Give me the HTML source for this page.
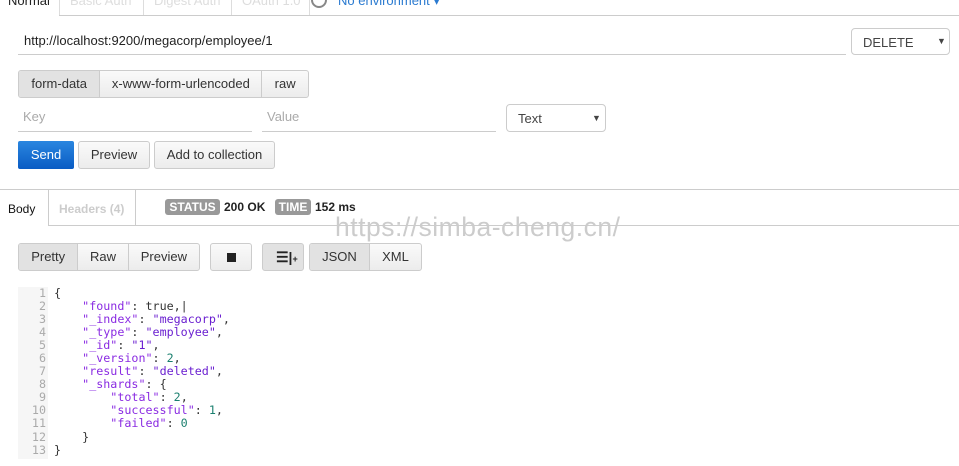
<!DOCTYPE html>
<html><head><style>
body{margin:0;width:959px;height:466px;background:#fff;font-family:"Liberation Sans",Arial,sans-serif;position:relative;overflow:hidden;font-size:13px;color:#333}
.a{position:absolute}
.btn{position:absolute;border:1px solid #ccc;border-radius:3px;background:linear-gradient(#fafafa,#ececec);box-sizing:border-box;text-align:center;font-size:13px;color:#333}
.grp{position:absolute;border:1px solid #ccc;border-radius:3px;display:flex;box-sizing:border-box;overflow:hidden;background:linear-gradient(#fafafa,#ececec)}
.grp div{border-right:1px solid #ccc;text-align:center;font-size:13px;color:#333;box-sizing:border-box}
.grp div:last-child{border-right:none}
.grp .on{background:#e2e2e2}
.code{position:absolute;left:54px;top:287px;font-family:"DejaVu Sans Mono","Liberation Mono",monospace;font-size:11.7px;line-height:13.05px;white-space:pre;color:#333}
.k{color:#8a2be2}.s{color:#6a1fd0}.n{color:#1a7f6e}
.ln{position:absolute;left:18px;top:287px;width:30px;height:172px;background:#f6f6f6;font-family:"DejaVu Sans Mono",monospace;font-size:11.7px;line-height:13.05px;color:#aaa;text-align:right;white-space:pre;padding-right:2px;box-sizing:border-box}
</style></head><body>
<div class="a" style="left:8px;top:-7px;font-size:13px;color:#222">Normal</div>
<div class="a" style="left:59px;top:-8px;width:250px;height:23px;border-left:1px solid #ddd"></div>
<div class="a" style="left:143px;top:-8px;height:23px;border-left:1px solid #ddd"></div>
<div class="a" style="left:231px;top:-8px;height:23px;border-left:1px solid #ddd"></div>
<div class="a" style="left:309px;top:-8px;height:23px;border-left:1px solid #ddd"></div>
<div class="a" style="left:70px;top:-7px;color:#ddd">Basic Auth</div>
<div class="a" style="left:154px;top:-7px;color:#ddd">Digest Auth</div>
<div class="a" style="left:242px;top:-7px;color:#ddd">OAuth 1.0</div>
<div class="a" style="left:311px;top:-8px;width:12px;height:12px;border:2px solid #888;border-radius:50%"></div>
<div class="a" style="left:338px;top:-7px;color:#2a7ad0">No environment ▾</div>
<div class="a" style="left:59px;top:15px;width:900px;border-top:1px solid #ccc"></div>

<div class="a" style="left:24px;top:33px;font-size:13px;color:#222">http://localhost:9200/megacorp/employee/1</div>
<div class="a" style="left:18px;top:54px;width:828px;border-top:1px solid #ccc"></div>
<div class="a" style="left:851px;top:28px;width:99px;height:27px;border:1px solid #ccc;border-radius:4px;box-sizing:border-box"><span class="a" style="left:11px;top:6px;color:#444">DELETE</span><span class="a" style="left:85px;top:7px;font-size:9px;color:#444">▼</span></div>

<div class="grp" style="left:18px;top:70px;width:291px;height:28px"><div class="on" style="width:82px;line-height:26px">form-data</div><div style="width:163px;line-height:26px">x-www-form-urlencoded</div><div style="width:46px;line-height:26px">raw</div></div>

<div class="a" style="left:23px;top:109px;color:#aaa">Key</div>
<div class="a" style="left:18px;top:131px;width:234px;border-top:1px solid #ccc"></div>
<div class="a" style="left:267px;top:109px;color:#aaa">Value</div>
<div class="a" style="left:262px;top:131px;width:234px;border-top:1px solid #ccc"></div>
<div class="a" style="left:506px;top:104px;width:100px;height:28px;border:1px solid #ccc;border-radius:4px;box-sizing:border-box"><span class="a" style="left:11px;top:6px;color:#444">Text</span><span class="a" style="left:85px;top:8px;font-size:9px;color:#444">▼</span></div>

<div class="a" style="left:18px;top:141px;width:56px;height:28px;background:linear-gradient(#2a86e0,#0a5cc4);border-radius:2px;color:#fff;text-align:center;line-height:28px">Send</div>
<div class="btn" style="left:78px;top:141px;width:72px;height:28px;line-height:26px">Preview</div>
<div class="btn" style="left:154px;top:141px;width:121px;height:28px;line-height:26px">Add to collection</div>

<div class="a" style="left:0;top:189px;width:959px;border-top:1px solid #ccc"></div>
<div class="a" style="left:8px;top:202px;font-size:12px;color:#111">Body</div>
<div class="a" style="left:48px;top:189px;width:86px;height:36px;border-left:1px solid #ccc;border-right:1px solid #ccc"></div>
<div class="a" style="left:59px;top:202px;font-size:12px;color:#ccc;font-weight:bold">Headers (4)</div>
<div class="a" style="left:48px;top:225px;width:911px;border-top:1px solid #ccc"></div>
<div class="a" style="left:165px;top:199px;width:55px;height:16px;background:#999;border-radius:3px;color:#fff;font-weight:bold;font-size:12px;text-align:center;line-height:16px">STATUS</div>
<div class="a" style="left:224px;top:200px;font-weight:bold;font-size:12px;color:#222">200 OK</div>
<div class="a" style="left:275px;top:199px;width:36px;height:16px;background:#999;border-radius:3px;color:#fff;font-weight:bold;font-size:12px;text-align:center;line-height:16px">TIME</div>
<div class="a" style="left:315px;top:200px;font-weight:bold;font-size:12px;color:#222">152 ms</div>
<div class="a" style="left:335px;top:212px;font-size:26.5px;color:#ccc;letter-spacing:0.5px">https://simba-cheng.cn/</div>

<div class="grp" style="left:18px;top:243px;width:182px;height:28px"><div class="on" style="width:60px;line-height:26px">Pretty</div><div style="width:51px;line-height:26px">Raw</div><div style="width:71px;line-height:26px">Preview</div></div>
<div class="btn" style="left:210px;top:243px;width:42px;height:28px"><div class="a" style="left:16px;top:9px;width:9px;height:9px;background:#222"></div></div>
<div class="btn" style="left:262px;top:243px;width:42px;height:28px;background:#e2e2e2"><span class="a" style="left:13px;top:5px;font-size:14px;font-weight:bold;color:#222">☰|<span style="font-size:9px">+</span></span></div>
<div class="grp" style="left:309px;top:243px;width:113px;height:28px"><div class="on" style="width:61px;line-height:26px">JSON</div><div style="width:52px;line-height:26px">XML</div></div>

<div class="ln">1
2
3
4
5
6
7
8
9
10
11
12
13</div>
<div class="code">{
    <span class="k">"found"</span>: true,|
    <span class="k">"_index"</span>: <span class="s">"megacorp"</span>,
    <span class="k">"_type"</span>: <span class="s">"employee"</span>,
    <span class="k">"_id"</span>: <span class="s">"1"</span>,
    <span class="k">"_version"</span>: <span class="n">2</span>,
    <span class="k">"result"</span>: <span class="s">"deleted"</span>,
    <span class="k">"_shards"</span>: {
        <span class="k">"total"</span>: <span class="n">2</span>,
        <span class="k">"successful"</span>: <span class="n">1</span>,
        <span class="k">"failed"</span>: <span class="n">0</span>
    }
}</div>
</body></html>
